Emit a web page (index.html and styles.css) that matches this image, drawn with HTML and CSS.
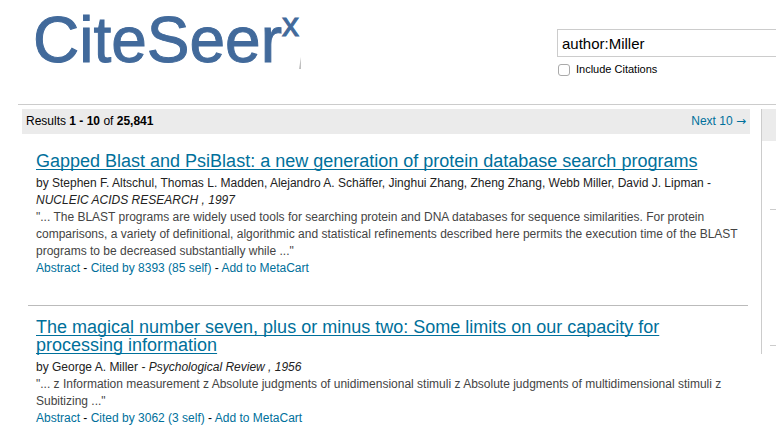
FILE: index.html
```html
<!DOCTYPE html>
<html lang="en">
<head>
  <meta charset="UTF-8">
  <meta name="viewport" content="width=device-width, initial-scale=1">
  <title>CiteSeerX - author:Miller</title>
  <link rel="stylesheet" href="styles.css">
</head>
<body>

  <header class="header">
    <div class="logo">
      <span class="logo-name">CiteSeer</span><span class="logo-x">x</span>
      <svg class="logo-mark" width="2" height="12" viewBox="0 0 2 12"><path d="M2 0V12H0Z" fill="#c0c0c0"/></svg>
    </div>
    <form class="search">
      <input type="text" class="search-box" name="q" value="author:Miller" aria-label="Search">
      <div class="option">
        <input type="checkbox" id="include_citations" name="ic">
        <label for="include_citations">Include Citations</label>
      </div>
    </form>
  </header>

  <div class="content">
    <main class="results">
      <div class="result-info">
        <span>Results <strong>1 - 10</strong> of <strong>25,841</strong></span>
        <a href="#">Next 10 <span class="arrow">→</span></a>
      </div>

      <div class="result">
        <h3><a href="#">Gapped Blast and PsiBlast: a new generation of protein database search programs</a></h3>
        <div class="authors">by Stephen F. Altschul, Thomas L. Madden, Alejandro A. Schäffer, Jinghui Zhang, Zheng Zhang, Webb Miller, David J. Lipman - <em>NUCLEIC ACIDS RESEARCH , 1997</em></div>
        <div class="snippet">"... The BLAST programs are widely used tools for searching protein and DNA databases for sequence similarities. For protein comparisons, a variety of definitional, algorithmic and statistical refinements described here permits the execution time of the BLAST programs to be decreased substantially while ..."</div>
        <div class="actions"><a href="#">Abstract</a> - <a href="#">Cited by 8393 (85 self)</a> - <a href="#">Add to MetaCart</a></div>
      </div>

      <div class="result">
        <h3><a href="#">The magical number seven, plus or minus two: Some limits on our capacity for processing information</a></h3>
        <div class="authors">by George A. Miller - <em>Psychological Review , 1956</em></div>
        <div class="snippet">"... z Information measurement z Absolute judgments of unidimensional stimuli z Absolute judgments of multidimensional stimuli z Subitizing ..."</div>
        <div class="actions"><a href="#">Abstract</a> - <a href="#">Cited by 3062 (3 self)</a> - <a href="#">Add to MetaCart</a></div>
      </div>
    </main>

    <aside class="sidebar">
      <div class="sidebar-head"></div>
      <div class="sidebar-block"></div>
      <div class="sidebar-block sidebar-tools"></div>
    </aside>
  </div>

</body>
</html>
```
FILE: styles.css
```css
body {
  margin: 0;
  padding-left: 18px;
  font-family: "Liberation Sans", Arial, sans-serif;
  font-size: 12px;
  line-height: 17px;
  color: #000;
  background-color: #fff;
}

a {
  color: #00709b;
  text-decoration: none;
}

.header {
  display: flex;
  justify-content: space-between;
  height: 104px;
  border-bottom: 1px solid #ccc;
}

.logo {
  display: flex;
  align-items: flex-start;
  width: 283px;
  height: 69px;
  padding-left: 15px;
  box-sizing: border-box;
  position: relative;
  color: #426a9b;
  -webkit-text-stroke: 1px #426a9b;
}

.logo-name {
  font-size: 64px;
  line-height: 80px;
}

.logo-x {
  font-size: 34px;
  line-height: 48px;
}

.logo-mark {
  position: absolute;
  right: 0;
  bottom: 0;
}

.search {
  width: 219px;
  padding-top: 29px;
}

.search-box {
  display: block;
  width: 100%;
  height: 28px;
  padding: 0 4px;
  box-sizing: border-box;
  border: 1px solid #ccc;
  border-right: 0;
  font: 15px "Liberation Sans", Arial, sans-serif;
}

.option {
  display: flex;
  align-items: center;
  gap: 6px;
  padding: 4px 1px;
  font-size: 11px;
}

.option input {
  appearance: none;
  width: 12px;
  height: 12px;
  margin: 0;
  border: 1px solid #aaa;
  border-radius: 3px;
  background-color: #fff;
}

.option input:checked {
  background-color: #00709b;
}

.content {
  display: flex;
  align-items: flex-start;
  gap: 11px;
  padding: 4px 0 0 4px;
}

.results {
  flex: 1;
}

.result-info {
  display: flex;
  justify-content: space-between;
  height: 17px;
  padding: 4px;
  background-color: #ebebeb;
}

.arrow {
  font-family: "DejaVu Sans", sans-serif;
}

.result {
  margin: 0 2px 0 6px;
  padding: 18px 8px 28px;
}

.result + .result {
  padding-top: 12px;
  padding-bottom: 0;
  border-top: 1px solid #bbb;
}

.result h3 {
  margin: 0 0 5px;
  font-size: 18px;
  font-weight: normal;
  line-height: 18px;
}

.result h3 a {
  text-decoration: underline;
  text-decoration-thickness: 1px;
  text-decoration-skip-ink: none;
  text-underline-offset: 2px;
}

.authors {
  color: #222;
}

.snippet {
  color: #444;
}

.sidebar {
  width: 14px;
  height: 245px;
  border-left: 1px solid #ccc;
}

.sidebar-head {
  height: 32px;
  background-color: #ebebeb;
}

.sidebar-block {
  height: 68px;
  margin-left: 8px;
  border-bottom: 1px solid #ccc;
}

.sidebar-tools {
  height: 135px;
}
```
